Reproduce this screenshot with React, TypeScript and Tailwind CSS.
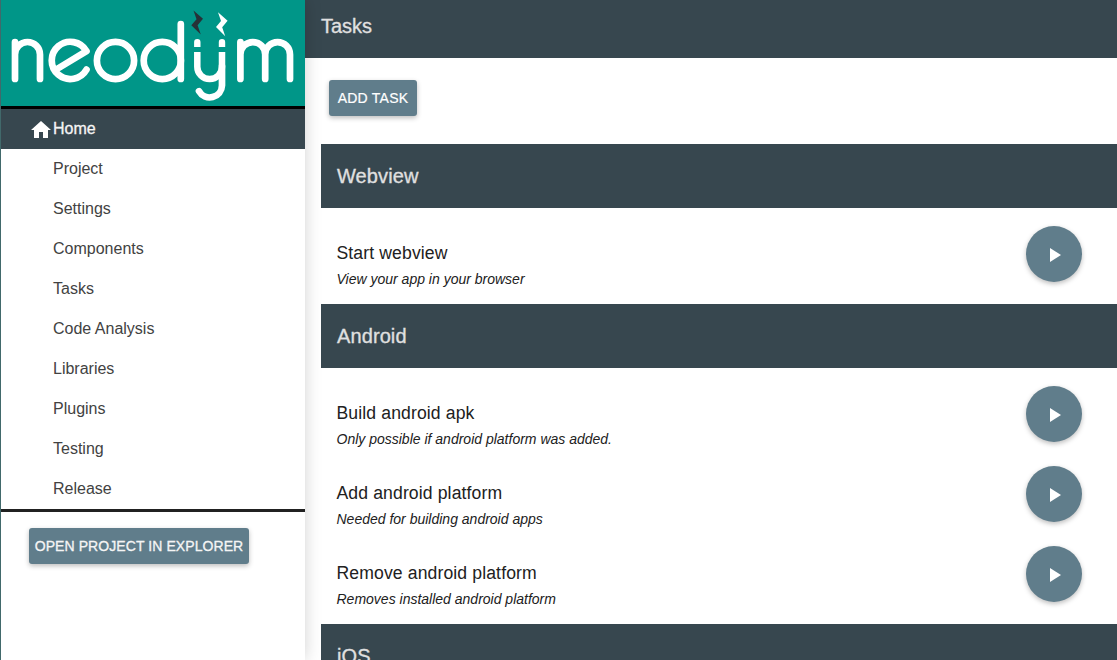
import React from "react";

const navItems = ["Project", "Settings", "Components", "Tasks", "Code Analysis", "Libraries", "Plugins", "Testing", "Release"];

const sections = [
  { title: "Webview", tasks: [{ name: "Start webview", note: "View your app in your browser" }] },
  {
    title: "Android",
    tasks: [
      { name: "Build android apk", note: "Only possible if android platform was added." },
      { name: "Add android platform", note: "Needed for building android apps" },
      { name: "Remove android platform", note: "Removes installed android platform" },
    ],
  },
  { title: "iOS", tasks: [] },
];

function Logo() {
  return (
    <svg viewBox="0 0 304 106" className="block h-[106px] w-[304px]" role="img" aria-label="neodym">
      <g transform="translate(-1 0)">
        <g fill="none" stroke="#fff" strokeWidth="6.7" strokeLinecap="round" strokeLinejoin="round">
          <path d="M15 42V79M15 54.5A12.5 12.5 0 0 1 40 54.5V79" />
          <path d="M86.5 69.6A18.6 18.6 0 1 1 86.5 51.2L57 69" />
          <circle cx="115.5" cy="60.5" r="18.6" />
          <circle cx="162.3" cy="60.5" r="18.6" />
          <path d="M180.8 24V79" />
          <path d="M240.4 42V79M240.4 54.5A12.4 12.4 0 0 1 265.2 54.5V79M265.2 54.5A12.4 12.4 0 0 1 290 54.5V79" />
          <path d="M222 66V85.5A12.3 12.3 0 0 1 199 91.2" />
        </g>
        <path d="M197.3 52V66.7A12.35 12.35 0 0 0 222 66.7V52" fill="none" stroke="#fff" strokeWidth="6.5" />
        <path d="M194.1 47V42.2a3.2 3.2 0 0 1 6.4 0V47ZM218.8 47V42.2a3.2 3.2 0 0 1 6.4 0V47Z" fill="#fff" />
        <path d="M193.5 10.5L203 18.7L197.6 25.3L200.8 34.5L191.3 25.3L196.5 19.2Z" fill="#263238" />
        <path d="M218 12.2L227.6 20.7L222.2 27.3L225.2 36.3L216 27L221 21Z" fill="#fff" />
      </g>
    </svg>
  );
}

function Sidebar() {
  return (
    <aside className="z-10 flex w-[305px] shrink-0 flex-col border-l border-[#41696b] bg-white shadow-[0_0_16px_rgba(0,0,0,0.18)]">
      <div className="h-[109px] shrink-0 border-b-[3px] border-black bg-[#009688]">
        <Logo />
      </div>
      <nav className="border-b-[3px] border-[#212121] text-base text-[#424242]">
        <a className="flex h-10 items-center bg-[#37474f] pl-7 text-[#f5f5f5] [-webkit-text-stroke:0.3px_#f5f5f5]">
          <svg viewBox="0 0 24 24" className="mt-0.5 size-6 fill-white">
            <path d="M10 20v-6h4v6h5v-8h3L12 3 2 12h3v8z" />
          </svg>
          Home
        </a>
        {navItems.map((item) => (
          <a key={item} className="flex h-10 items-center pl-[52px]">{item}</a>
        ))}
      </nav>
      <button className="mt-4 ml-7 h-9 w-[220px] rounded-[3px] bg-[#607d8b] text-sm tracking-[0.08px] whitespace-nowrap text-[#f5f5f5] shadow-[0_2px_5px_rgba(0,0,0,0.26)] [-webkit-text-stroke:0.3px_#f5f5f5]">
        OPEN PROJECT IN EXPLORER
      </button>
    </aside>
  );
}

function Task({ name, note }: { name: string; note: string }) {
  return (
    <div className="flex h-20 items-start justify-between pr-[35px] pl-[15.5px]">
      <div className="pt-[25px]">
        <h3 className="text-[17.6px] leading-6 tracking-[0.12px] text-[#212121]">{name}</h3>
        <p className="mt-0.5 text-sm leading-6 text-[#212121] italic">{note}</p>
      </div>
      <button aria-label="Run" className="mt-2.5 flex size-14 items-center justify-center rounded-full bg-[#607d8b] pt-0.5 shadow-[0_2px_5px_rgba(0,0,0,0.26)]">
        <svg viewBox="0 0 24 24" className="size-6 fill-white">
          <path d="M8 5v14l11-7z" />
        </svg>
      </button>
    </div>
  );
}

export default function App() {
  return (
    <div className="flex h-[660px] w-[1117px] overflow-hidden bg-white font-['Liberation_Sans',Arial,sans-serif]">
      <Sidebar />
      <main className="flex min-w-0 flex-1 flex-col">
        <header className="h-[58px] shrink-0 bg-[#37474f] pt-3 pl-4 text-xl leading-7 text-[#e0e0e0] [-webkit-text-stroke:0.3px_#e0e0e0]">Tasks</header>
        <div className="flex min-h-0 flex-1 flex-col pt-[22px] pl-4">
          <button className="ml-2 h-9 w-[88px] shrink-0 rounded-[3px] bg-[#607d8b] text-sm tracking-[0.25px] text-white shadow-[0_2px_5px_rgba(0,0,0,0.26)] [-webkit-text-stroke:0.2px_#fff]">ADD TASK</button>
          <div className="mt-7">
            {sections.map((s) => (
              <section key={s.title}>
                <h2 className="flex h-16 items-center bg-[#37474f] pl-4 text-xl tracking-[0.1px] text-[#e0e0e0] [-webkit-text-stroke:0.3px_#e0e0e0]">{s.title}</h2>
                {s.tasks.length > 0 && (
                  <div className="pt-2 pb-2">
                    {s.tasks.map((t) => <Task key={t.name} {...t} />)}
                  </div>
                )}
              </section>
            ))}
          </div>
        </div>
      </main>
    </div>
  );
}
